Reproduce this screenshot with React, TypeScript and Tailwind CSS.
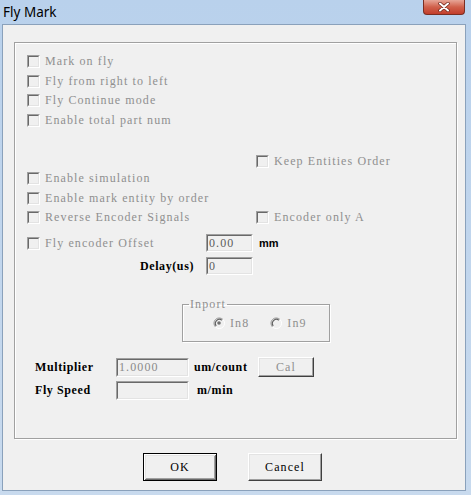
import React from "react"

const mono = "font-[family-name:'Liberation_Serif',serif] text-[12px] leading-[13px] tracking-[1.1px]"
const bold = "font-[family-name:'Liberation_Serif',serif] text-[12px] leading-[13px] tracking-[0.6px] font-bold text-black"
const gray = "text-[#8f8f8f]"

function Box() {
  return (
    <span className="block shrink-0 w-[13px] h-[13px] border border-t-[#a0a0a0] border-l-[#a0a0a0] border-r-white border-b-white">
      <span className="block w-full h-full border border-t-[#696969] border-l-[#696969] border-r-[#e3e3e3] border-b-[#e3e3e3] bg-[#f0f0f0]" />
    </span>
  )
}

function Check({ label }: { label: string }) {
  return (
    <div className="flex items-center h-[13px]">
      <Box />
      <span className={"ml-[5px] whitespace-nowrap " + gray + " " + mono}>{label}</span>
    </div>
  )
}

function Radio({ checked, label }: { checked?: boolean; label: string }) {
  return (
    <div className="flex items-center h-[12px]">
      <svg width="12" height="12" viewBox="0 0 12 12" className="shrink-0">
        <circle cx="6" cy="6" r="5" fill="#f0f0f0" />
        <path d="M10 2.5 A5 5 0 0 0 2.5 10" fill="none" stroke="#9a9a9a" strokeWidth="1" />
        <path d="M8.8 3.2 A4 4 0 0 0 3.2 8.8" fill="none" stroke="#606060" strokeWidth="1.2" />
        <path d="M2.5 10 A5 5 0 0 0 10 2.5" fill="none" stroke="#ffffff" strokeWidth="1" />
        {checked && <circle cx="6" cy="6" r="1.8" fill="#707070" />}
      </svg>
      <span className={"ml-[5px] " + gray + " " + mono}>{label}</span>
    </div>
  )
}

function Edit({ value, className, color }: { value?: string; className: string; color?: string }) {
  return (
    <div className={"border border-t-[#a0a0a0] border-l-[#a0a0a0] border-r-white border-b-white " + className}>
      <div className={"w-full h-full border border-t-[#696969] border-l-[#696969] border-r-[#e3e3e3] border-b-[#e3e3e3] bg-[#f0f0f0] pl-[1px] flex items-center " + mono + " " + (color ?? "text-[#6e6e6e]")}>
        {value}
      </div>
    </div>
  )
}

export default function App() {
  return (
    <div className="w-[471px] h-[495px] bg-gradient-to-b from-[#b9d1ec] to-[#c8daee] flex flex-col overflow-hidden">
      {/* title bar */}
      <div className="h-[24px] flex items-start justify-between">
        <span className="ml-[3px] mt-[2px] text-[13.5px] leading-[20px] text-black font-[family-name:'Noto_Sans',sans-serif]">Fly Mark</span>
        <div className="mr-[6px] w-[42px] h-[15px] rounded-b-[4px] border border-t-0 border-[#7a2e22] bg-gradient-to-b from-[#e6a597] via-[#d0604b] to-[#c23d2b] flex items-center justify-center">
          <svg width="12" height="10" viewBox="0 0 12 10">
            <path d="M2 1.5 L10 8.5 M10 1.5 L2 8.5" stroke="#6a2218" strokeWidth="3.4" strokeLinecap="round" />
            <path d="M2 1.5 L10 8.5 M10 1.5 L2 8.5" stroke="#ffffff" strokeWidth="2" strokeLinecap="round" />
          </svg>
        </div>
      </div>

      {/* client area */}
      <div className="ml-[2px] w-[464px] h-[467px] border border-[#8aa1bb] bg-[#f0f0f0] flex flex-col">
        <div className="ml-[11px] mt-[17px] w-[443px] h-[397px] border border-[#a0a0a0] shadow-[1px_1px_0_#ffffff,inset_1px_1px_0_#ffffff] flex flex-col">
          <div className="pl-[12px] flex flex-col">
            <div className="mt-[12px]"><Check label="Mark on fly" /></div>
            <div className="mt-[6.5px]"><Check label="Fly from right to left" /></div>
            <div className="mt-[6.5px]"><Check label="Fly Continue mode" /></div>
            <div className="mt-[6.5px]"><Check label="Enable total part num" /></div>
            <div className="mt-[28.5px] ml-[229px]"><Check label="Keep Entities Order" /></div>
            <div className="mt-[4px]"><Check label="Enable simulation" /></div>
            <div className="mt-[6.5px]"><Check label="Enable mark entity by order" /></div>
            <div className="mt-[6.5px] flex">
              <div className="w-[229px]"><Check label="Reverse Encoder Signals" /></div>
              <Check label="Encoder only A" />
            </div>
          </div>

          <div className="mt-[10px] h-[18px] flex items-center">
            <div className="pl-[12px] w-[191px]"><Check label="Fly encoder Offset" /></div>
            <Edit value="0.00" className="w-[47px] h-[18px]" color="text-[#5c5c5c]" />
            <span className="ml-[6px] font-[family-name:'Liberation_Sans',sans-serif] font-bold text-[11px] text-black">mm</span>
          </div>

          <div className="mt-[5px] h-[18px] flex items-center">
            <span className={"w-[191px] pr-[12px] text-right " + bold}>Delay(us)</span>
            <Edit value="0" className="w-[47px] h-[18px]" color="text-[#5c5c5c]" />
          </div>

          <fieldset className="mt-[23px] ml-[167px] w-[148px] h-[44px] px-[6px] border border-[#a0a0a0] shadow-[1px_1px_0_#ffffff,inset_1px_1px_0_#ffffff]">
            <legend className={"px-[1px] " + gray + " " + mono}>Inport</legend>
            <div className="mt-[6px] ml-[24px] flex">
              <Radio checked label="In8" />
              <div className="ml-[21px]"><Radio label="In9" /></div>
            </div>
          </fieldset>

          <div className="mt-[15px] h-[20px] flex items-center">
            <span className={"ml-[20px] w-[81px] " + bold}>Multiplier</span>
            <Edit value="1.0000" className="w-[73px] h-[19px]" color="text-[#8a8a8a]" />
            <span className={"ml-[5px] w-[64px] " + bold}>um/count</span>
            <button className={"w-[56px] h-[20px] bg-[#f0f0f0] border border-t-white border-l-white border-r-[#404040] border-b-[#404040] shadow-[inset_-1px_-1px_0_#a0a0a0,inset_1px_1px_0_#e3e3e3] " + gray + " " + mono}>
              Cal
            </button>
          </div>

          <div className="mt-[4px] h-[19px] flex items-center">
            <span className={"ml-[20px] w-[81px] " + bold}>Fly Speed</span>
            <Edit className="w-[73px] h-[19px]" />
            <span className={"ml-[8px] " + bold}>m/min</span>
          </div>
        </div>

        <div className="mt-[14px] ml-[140px] flex">
          <button className={"w-[74px] h-[28px] bg-[#f0f0f0] border border-black shadow-[inset_1px_1px_0_#ffffff,inset_-1px_-1px_0_#696969,inset_2px_2px_0_#e3e3e3,inset_-2px_-2px_0_#a0a0a0] text-black " + mono}>
            OK
          </button>
          <button className={"ml-[31px] w-[74px] h-[28px] bg-[#f0f0f0] border border-t-white border-l-white border-r-[#404040] border-b-[#404040] shadow-[inset_-1px_-1px_0_#a0a0a0,inset_1px_1px_0_#e3e3e3] text-black " + mono}>
            Cancel
          </button>
        </div>
      </div>
    </div>
  )
}
